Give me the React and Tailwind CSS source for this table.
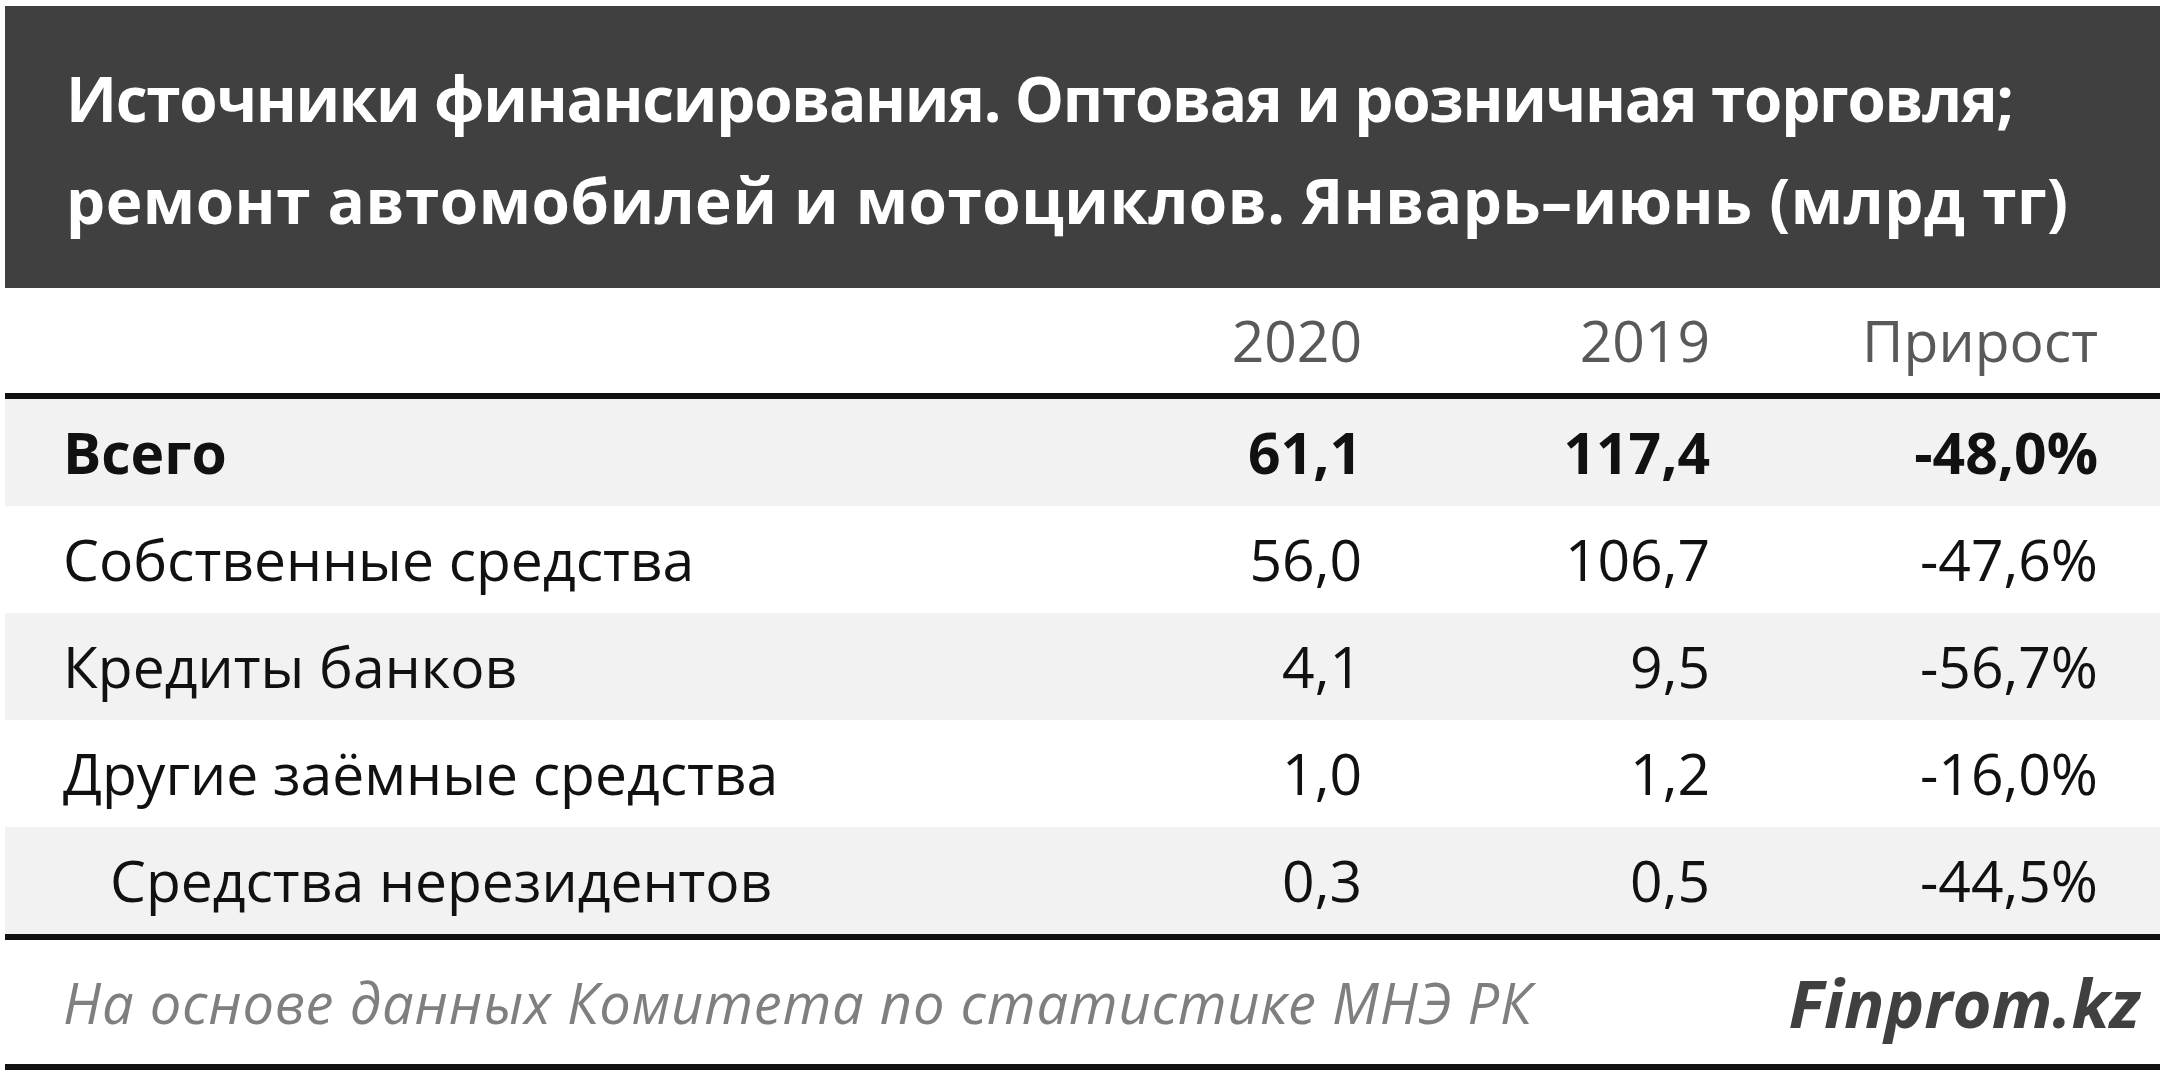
import React from "react";

const rows = [
  { label: "Всего", a: "61,1", b: "117,4", c: "-48,0%", bold: true, gray: true },
  { label: "Собственные средства", a: "56,0", b: "106,7", c: "-47,6%" },
  { label: "Кредиты банков", a: "4,1", b: "9,5", c: "-56,7%", gray: true },
  { label: "Другие заёмные средства", a: "1,0", b: "1,2", c: "-16,0%" },
  { label: "Средства нерезидентов", a: "0,3", b: "0,5", c: "-44,5%", gray: true, indent: true },
];

export default function App() {
  return (
    <div className="w-[2160px] h-[1075px] overflow-hidden bg-white pt-[6px] pl-[5px] font-['Open_Sans',sans-serif]">
      {/* title */}
      <div className="h-[282px] bg-[#404040] text-white px-[61px] pt-[4px] flex flex-col justify-center text-[62px] leading-[102px] font-bold whitespace-nowrap">
        <p className="tracking-[-1.3px]">Источники финансирования. Оптовая и розничная торговля;</p>
        <p className="tracking-[0.5px]">ремонт автомобилей и мотоциклов. Январь–июнь (млрд тг)</p>
      </div>

      {/* column heads */}
      <div className="grid grid-cols-[1fr_300px_348px_388px] pr-[62px] h-[111px] items-center text-[57px] text-[#595959] border-b-[6px] border-[#111]">
        <div />
        <div className="text-right">2020</div>
        <div className="text-right">2019</div>
        <div className="text-right">Прирост</div>
      </div>

      {/* rows */}
      {rows.map((r) => (
        <div
          key={r.label}
          className={`grid grid-cols-[1fr_300px_348px_388px] pr-[62px] h-[107px] items-center text-[57px] text-[#111] ${r.gray ? "bg-[#f2f2f2]" : "bg-white"} ${r.bold ? "font-bold" : ""}`}
        >
          <div className={r.indent ? "pl-[105px]" : "pl-[58px]"}>{r.label}</div>
          <div className="text-right">{r.a}</div>
          <div className="text-right">{r.b}</div>
          <div className="text-right">{r.c}</div>
        </div>
      ))}

      {/* footer */}
      <div className="border-t-[6px] border-b-[6px] border-[#111] h-[136px] flex items-center justify-between pl-[58px] pr-[20px]">
        <p className="italic text-[56px] tracking-[0.8px] text-[#7f7f7f]">На основе данных Комитета по статистике МНЭ РК</p>
        <p className="italic font-bold text-[67px] text-[#404040]">Finprom.kz</p>
      </div>
    </div>
  );
}
